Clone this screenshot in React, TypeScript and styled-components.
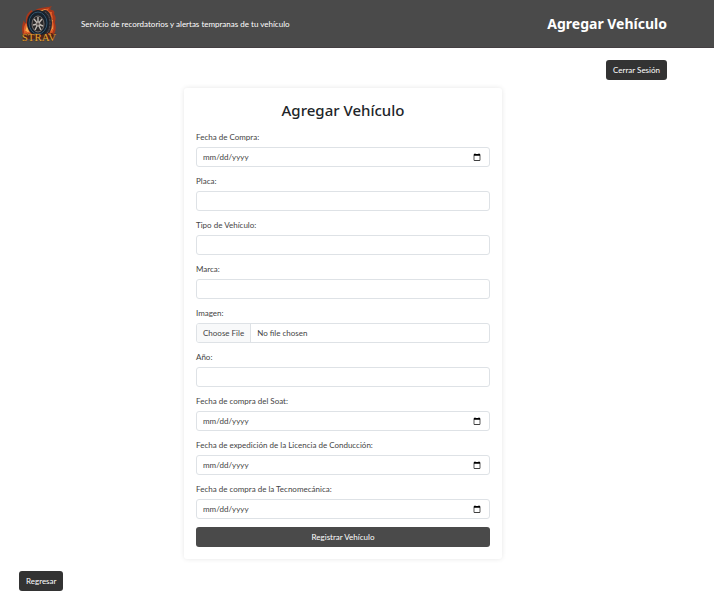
import React from "react";
import styled, { createGlobalStyle } from "styled-components";

const GlobalStyle = createGlobalStyle`
  *, *::before, *::after { box-sizing: border-box; }
  body {
    margin: 0;
    background: #fff;
    color: #212529;
    font-family: "Segoe UI", Lato, "Noto Sans", sans-serif;
    font-size: 8px;
    line-height: 12px;
  }
`;

const Header = styled.header`
  display: flex;
  align-items: center;
  justify-content: space-between;
  height: 48px;
  padding: 0 47px 0 19px;
  background: #4a4a4a;
  border-bottom: 1px solid #443f42;
  color: #fff;
`;

const Brand = styled.div`
  display: flex;
  align-items: center;
  gap: 22px;
`;

const LogoArt = styled.svg`
  display: block;
  width: 40px;
  height: 40px;
`;

const Slogan = styled.p`
  margin: 0;
`;

const HeaderTitle = styled.h1`
  margin: 0;
  font-family: "Segoe UI", "Noto Sans", sans-serif;
  font-size: 14px;
  line-height: 20px;
  font-weight: 700;
`;

const Main = styled.main`
  display: flex;
  flex-direction: column;
  padding: 12px 47px 11px 19px;
`;

const Button = styled.button<{ $wide?: boolean; $end?: boolean }>`
  align-self: ${(p) => (p.$end ? "flex-end" : "flex-start")};
  width: ${(p) => (p.$wide ? "100%" : "auto")};
  height: 20px;
  padding: 0 7px;
  border: 0;
  border-radius: 3px;
  background: ${(p) => (p.$wide ? "#4a4a4a" : "#333")};
  color: #fff;
  font: inherit;
  cursor: pointer;
`;

const Card = styled.form`
  align-self: center;
  display: flex;
  flex-direction: column;
  gap: 8px;
  width: 100%;
  max-width: 318px;
  margin: 8px 0 12px;
  padding: 12px;
  border-radius: 3px;
  background: #fff;
  box-shadow: 0 0 5px rgba(0, 0, 0, 0.1);
`;

const CardTitle = styled.h2`
  margin: 0 0 2px;
  font-family: "Segoe UI", "Noto Sans", sans-serif;
  font-size: 15px;
  line-height: 21px;
  font-weight: 500;
  text-align: center;
`;

const Field = styled.div`
  display: flex;
  flex-direction: column;
  gap: 4px;
`;

const Label = styled.label`
  color: #444;
`;

const Input = styled.input`
  width: 100%;
  height: 20px;
  padding: 3px 6px;
  border: 1px solid #dee2e6;
  border-radius: 3px;
  background: #fff;
  color: #444;
  font: inherit;
  overflow: hidden;

  &::-webkit-datetime-edit,
  &::-webkit-datetime-edit-fields-wrapper,
  &::-webkit-datetime-edit-month-field,
  &::-webkit-datetime-edit-day-field,
  &::-webkit-datetime-edit-year-field,
  &::-webkit-datetime-edit-text {
    padding: 0;
  }

  &::file-selector-button {
    height: 20px;
    margin: -4px 6px -4px -6px;
    padding: 0 6px;
    border: 0;
    border-right: 1px solid #dee2e6;
    background: #f8f9fa;
    color: #444;
    font: inherit;
  }
`;

const fields = [
  { id: "fechaCompra", label: "Fecha de Compra:", type: "date" },
  { id: "placa", label: "Placa:", type: "text" },
  { id: "tipo", label: "Tipo de Vehículo:", type: "text" },
  { id: "marca", label: "Marca:", type: "text" },
  { id: "imagen", label: "Imagen:", type: "file" },
  { id: "anio", label: "Año:", type: "text" },
  { id: "fechaSoat", label: "Fecha de compra del Soat:", type: "date" },
  { id: "fechaLicencia", label: "Fecha de expedición de la Licencia de Conducción:", type: "date" },
  { id: "fechaTecno", label: "Fecha de compra de la Tecnomecánica:", type: "date" },
];

function Logo() {
  return (
    <LogoArt viewBox="0 0 40 40" role="img" aria-label="STRAV">
      <path
        d="M5 34C2 27 3 20 5 16C5 18 6 19 7 19C6 12 9 8 13 6C13 8 14 8 15 7C20 3 26 4 33 2C31 4 31 5 32 6C35 6 36 8 35 10C38 14 36 16 36 19C38 25 36 31 32 34Z"
        fill="#a8371a"
      />
      <path
        d="M6 32C4 26 5 22 7 19L9 22C8 15 10 11 14 8L16 9C21 5 26 6 30 4C28 7 30 8 33 8C32 11 35 13 33 16C36 20 35 28 31 32Z"
        fill="#e2622b"
      />
      <path d="M6 28l2-7 2 7zM9 15l5-5-2 5zM20 7l7-2-3 3zM31 12l3 5-2 1zM33 21l1 4-2 4z" fill="#f7ab50" />
      <ellipse cx="26" cy="19" rx="7" ry="13" fill="#2b292e" />
      <path d="M26 8q5 3 5 11t-4 11" fill="none" stroke="#5d575a" strokeWidth="1" strokeDasharray="2 1" />
      <ellipse cx="19" cy="19" rx="11" ry="13" fill="#18212b" />
      <ellipse cx="19" cy="19" rx="9" ry="11" fill="none" stroke="#31546e" strokeWidth="1" />
      <ellipse cx="19" cy="20" rx="6" ry="8" fill="#2a2829" stroke="#756d6a" strokeWidth="1" />
      <path
        d="M19 20V13M19 20l4-5M19 20l5 2M19 20l3 6M19 20l-3 6M19 20l-5 1M19 20l-4-5"
        stroke="#bdb8b3"
        strokeWidth="1.4"
      />
      <circle cx="19" cy="20" r="2" fill="#5b5250" stroke="#ded8cf" strokeWidth=".6" />
      <path d="M4 35q1-6 5-6 4 3 9 2 7 1 13-3 4 1 4 7z" fill="#51251a" />
      <path d="M5 30q2-4 3-1 2 2 4 1M29 30q3 0 5-5" fill="none" stroke="#dd5a23" strokeWidth="1.5" />
      <text
        x="20"
        y="37"
        textAnchor="middle"
        fontFamily="Liberation Serif, serif"
        fontSize="11"
        fill="#e0a334"
        stroke="#4b2714"
        strokeWidth=".7"
        paintOrder="stroke"
      >
        STRAV
      </text>
    </LogoArt>
  );
}

export default function App() {
  return (
    <>
      <GlobalStyle />
      <Header>
        <Brand>
          <Logo />
          <Slogan>Servicio de recordatorios y alertas tempranas de tu vehículo</Slogan>
        </Brand>
        <HeaderTitle>Agregar Vehículo</HeaderTitle>
      </Header>
      <Main>
        <Button type="button" $end>
          Cerrar Sesión
        </Button>
        <Card onSubmit={(e: React.FormEvent) => e.preventDefault()}>
          <CardTitle>Agregar Vehículo</CardTitle>
          {fields.map((f) => (
            <Field key={f.id}>
              <Label htmlFor={f.id}>{f.label}</Label>
              <Input id={f.id} name={f.id} type={f.type} />
            </Field>
          ))}
          <Button type="submit" $wide>
            Registrar Vehículo
          </Button>
        </Card>
        <Button type="button">Regresar</Button>
      </Main>
    </>
  );
}
